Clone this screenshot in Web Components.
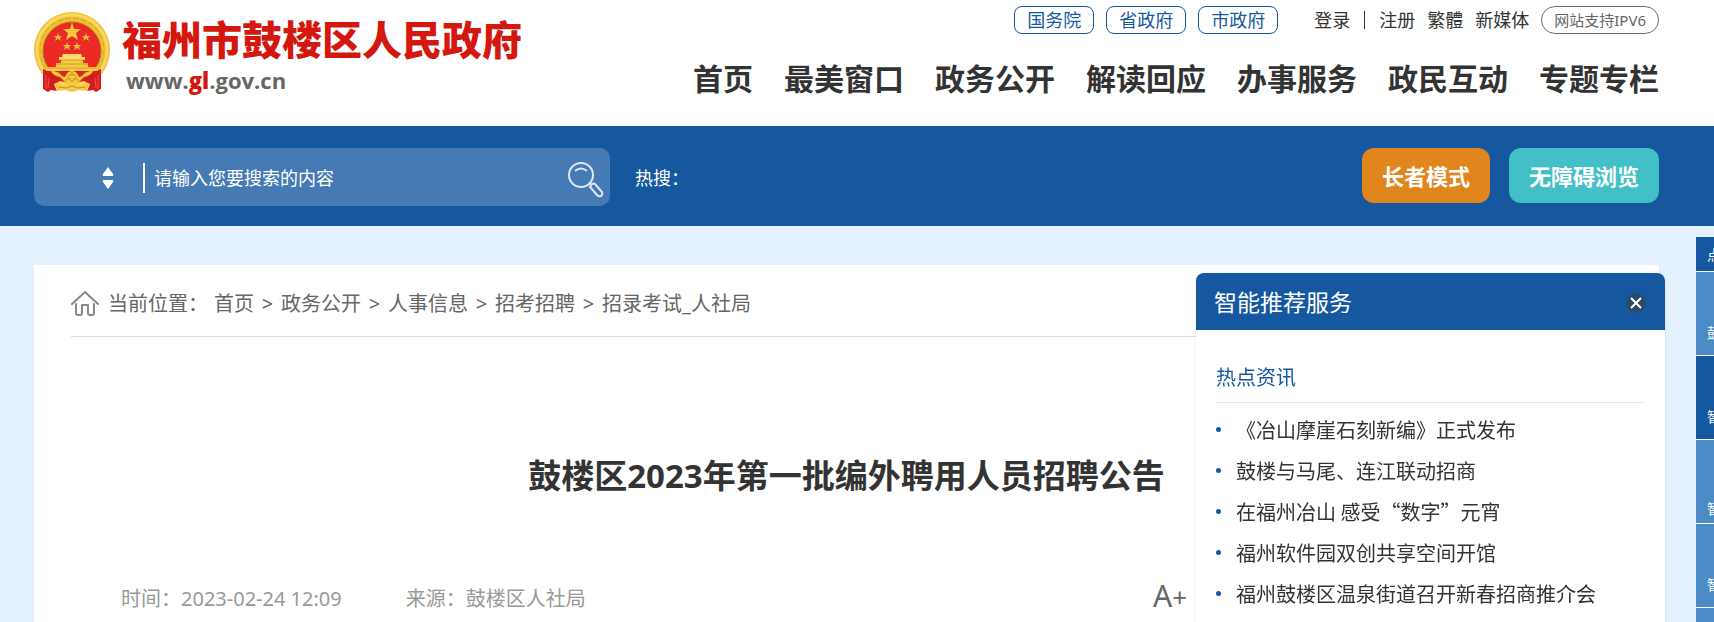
<!DOCTYPE html>
<html lang="zh-CN">
<head>
<meta charset="utf-8">
<meta name="viewport" content="width=device-width, initial-scale=1">
<title>鼓楼区2023年第一批编外聘用人员招聘公告</title>
<style>
  :root {
    --blue: #16589f;
    --blue-light: #4d8bc7;
    --page: #e4f2ff;
    --text: #333;
    --muted: #666;
    --gutter-left: 34px;
    --gutter-right: 55px;
  }

  body {
    margin: 0;
    background: var(--page);
    color: var(--text);
    font-family: "Noto Sans", "Noto Sans CJK SC", sans-serif;
    font-size: 18px;
    overflow: hidden;
  }
</style>
</head>
<body>
  <site-header></site-header>
  <search-bar></search-bar>
  <article-page heading="鼓楼区2023年第一批编外聘用人员招聘公告">
    <a slot="crumb" href="#">首页</a>
    <a slot="crumb" href="#">政务公开</a>
    <a slot="crumb" href="#">人事信息</a>
    <a slot="crumb" href="#">招考招聘</a>
    <a slot="crumb" href="#">招录考试_人社局</a>
    <span slot="meta">时间：2023-02-24 12:09</span>
    <span slot="meta">来源：鼓楼区人社局</span>
  </article-page>
  <recommend-panel heading="智能推荐服务" topic="热点资讯">
    <a href="#">《冶山摩崖石刻新编》正式发布</a>
    <a href="#">鼓楼与马尾、连江联动招商</a>
    <a href="#">在福州冶山 感受“数字”元宵</a>
    <a href="#">福州软件园双创共享空间开馆</a>
    <a href="#">福州鼓楼区温泉街道召开新春招商推介会</a>
  </recommend-panel>
  <side-tools></side-tools>

<script>
  // site-header
  class SiteHeader extends HTMLElement {
    constructor() {
      super();
      this.attachShadow({ mode: 'open' });

      this.shadowRoot.innerHTML = `
      <style>
        :host {
          display: flex;
          justify-content: space-between;
          box-sizing: border-box;
          height: 126px;
          padding: 0 var(--gutter-right) 0 var(--gutter-left);
          background: #fff;
        }

        a {
          color: inherit;
          text-decoration: none;
          white-space: nowrap;
        }

        .brand {
          display: flex;
          align-items: flex-start;
          gap: 12px;
          padding-top: 12px;
        }

        .brand svg {
          width: 76px;
          height: 80px;
        }

        .name {
          display: block;
          color: #d5180f;
          font-size: 40px;
          font-weight: 900;
          line-height: 56px;
        }

        .domain {
          display: block;
          padding-left: 4px;
          color: var(--muted);
          font-family: "Open Sans", sans-serif;
          font-size: 22px;
          font-weight: 700;
          line-height: 24px;
        }

        .domain b {
          color: #d5180f;
        }

        .right {
          display: flex;
          flex-direction: column;
          align-items: flex-end;
          gap: 23px;
          padding-top: 6px;
        }

        .top,
        .links {
          display: flex;
          align-items: center;
          gap: 12px;
          line-height: 26px;
        }

        .links {
          padding-left: 24px;
        }

        .pill {
          padding: 0 12px;
          border: 1px solid var(--blue);
          border-radius: 8px;
          color: var(--blue);
        }

        .ipv6 {
          padding: 0 12px;
          border: 1px solid var(--muted);
          border-radius: 14px;
          color: var(--muted);
          font-size: 15px;
        }

        .bar {
          width: 1px;
          height: 18px;
          margin: 0 2px;
          background: var(--text);
        }

        nav {
          display: flex;
          gap: 31px;
          font-size: 30px;
          font-weight: 700;
          line-height: 44px;
        }
      </style>

      <a class="brand" href="#">
        <svg viewBox="0 0 76 80" aria-hidden="true">
          <circle cx="38" cy="38" r="38" fill="#f0bf33"/>
          <circle cx="38" cy="38" r="35" fill="none" stroke="#f8d861" stroke-width="3"/>
          <circle cx="38" cy="38" r="32" fill="none" stroke="#dca323" stroke-width="1" stroke-dasharray="5 3"/>
          <circle cx="38" cy="39" r="29" fill="#ea2a24" stroke="#a8781c" stroke-width="1"/>
          <path d="M38 10l2 7h7l-5 4 2 7-6-4-6 4 2-7-5-4h7z" fill="#f5c93c"/>
          <g fill="#efb637">
            <path id="star" d="M24 21l1 3h3l-2 2 1 3-3-2-3 2 1-3-2-2h3z"/>
            <use href="#star" x="28"/>
            <use href="#star" x="9" y="9"/>
            <use href="#star" x="19" y="9"/>
          </g>
          <path d="M29 42h18l1 3h3v3H25v-3h3z" fill="#fbdc6c"/>
          <path d="M27 48h22v3h5v4h9l2 4H11l2-4h9v-4h5z" fill="#f6cb45"/>
          <path d="M27 48h22M22 52h32M14 56h48" stroke="#dc9a25" stroke-width="1" fill="none"/>
          <path d="M11 59h54l-8 8-19 5-19-5z" fill="#dc2420"/>
          <path d="M9 57l10 5 9 6-8 4 3 7-6-1-3 2-5-3zM67 57l-10 5-9 6 8 4-3 7 6-1 3 2 5-3z" fill="#d31c1c"/>
          <path d="M12 63v14M15 66l-1 10M64 63v14M61 66l1 10" stroke="#f2524a" stroke-width="1" fill="none"/>
          <path d="M17 59q8 0 11 5l3 1q2-6 7-6t7 6l3-1q3-5 11-5-2 5-9 6l-7 7H33l-7-7q-7-1-9-6z" fill="#f3c63b"/>
          <path d="M33 65q5-5 10 0M31 69l4-3 3 4 3-4 4 3M38 60v3" stroke="#c68d20" stroke-width="1" fill="none"/>
          <path d="M20 72l9 1 9-3 9 3 9-1-4 7-7-1-7 2-7-2-7 1z" fill="#f5ca42"/>
          <path d="M25 75l7 1 6-2 6 2 7-1" stroke="#c98e20" stroke-width="1" fill="none"/>
        </svg>
        <span>
          <span class="name">福州市鼓楼区人民政府</span>
          <span class="domain">www.<b>gl</b>.gov.cn</span>
        </span>
      </a>

      <div class="right">
        <div class="top">
          <a class="pill" href="#">国务院</a>
          <a class="pill" href="#">省政府</a>
          <a class="pill" href="#">市政府</a>
          <div class="links">
            <a href="#">登录</a>
            <span class="bar"></span>
            <a href="#">注册</a>
            <a href="#">繁體</a>
            <a href="#">新媒体</a>
            <a class="ipv6" href="#">网站支持IPV6</a>
          </div>
        </div>
        <nav>
          <a href="#">首页</a>
          <a href="#">最美窗口</a>
          <a href="#">政务公开</a>
          <a href="#">解读回应</a>
          <a href="#">办事服务</a>
          <a href="#">政民互动</a>
          <a href="#">专题专栏</a>
        </nav>
      </div>
    `;
    }
  }

  // search-bar
  class SearchBar extends HTMLElement {
    constructor() {
      super();
      this.attachShadow({ mode: 'open' });

      this.shadowRoot.innerHTML = `
      <style>
        :host {
          display: flex;
          align-items: flex-start;
          box-sizing: border-box;
          height: 100px;
          padding: 22px var(--gutter-right) 0 var(--gutter-left);
          background: var(--blue);
          color: #fff;
        }

        form {
          display: flex;
          align-items: center;
          box-sizing: border-box;
          flex: 0 1 576px;
          height: 58px;
          padding: 2px 6px 0 0;
          border-radius: 10px;
          background: #457ab4;
        }

        .type {
          display: grid;
          grid-template-columns: 68px 12px 1fr;
          align-items: center;
          width: 109px;
          height: 30px;
          border-right: 2px solid #fff;
        }

        .type svg {
          grid-area: 1 / 2;
          width: 12px;
          height: 22px;
          pointer-events: none;
        }

        select {
          grid-area: 1 / 1 / 2 / 4;
          width: 100%;
          height: 30px;
          border: 0;
          background: none;
          color: inherit;
          font: inherit;
          appearance: none;
        }

        input {
          flex: 1;
          min-width: 0;
          height: 40px;
          padding: 0 9px;
          border: 0;
          background: none;
          color: #fff;
          font: inherit;
        }

        input::placeholder {
          color: #fff;
          opacity: 1;
        }

        button {
          border: 0;
          border-radius: 12px;
          color: #fff;
          font: inherit;
          cursor: pointer;
        }

        .go {
          width: 36px;
          height: 42px;
          padding: 4px 0 0;
          background: none;
        }

        .go svg {
          display: block;
        }

        .hot {
          flex: 1;
          padding-left: 25px;
          line-height: 60px;
        }

        .modes {
          display: flex;
          gap: 19px;
        }

        .modes button {
          height: 55px;
          padding: 0 20px 2px;
          background: #e0861c;
          font-size: 22px;
          font-weight: 700;
          white-space: nowrap;
        }

        .modes .access {
          background: #43bfc7;
        }
      </style>

      <form role="search">
        <div class="type">
          <select aria-label="搜索类型"></select>
          <svg viewBox="0 0 12 22" fill="#fff" aria-hidden="true">
            <path d="M6 0l5 7q1 2-1 2H2q-2 0-1-2zM6 22l5-7q1-2-1-2H2q-2 0-1 2z"/>
          </svg>
        </div>
        <input type="search" aria-label="搜索" placeholder="请输入您要搜索的内容">
        <button class="go" type="button" aria-label="搜索">
          <svg width="36" height="38" viewBox="0 0 36 38" fill="none" stroke="#dce7f3" stroke-width="2" aria-hidden="true">
            <circle cx="13" cy="14" r="12"/>
            <path d="M7 10q6-5 12 0M21 23l2-1"/>
            <path d="M22 26l2-3q2-1 3 0l7 8q1 3-1 4-2 1-4-1z"/>
          </svg>
        </button>
      </form>
      <div class="hot">热搜：</div>
      <div class="modes">
        <button type="button">长者模式</button>
        <button type="button" class="access">无障碍浏览</button>
      </div>
    `;
    }
  }

  // article-page
  class ArticlePage extends HTMLElement {
    constructor() {
      super();
      this.attachShadow({ mode: 'open' });

      this.shadowRoot.innerHTML = `
      <style>
        :host {
          display: block;
          min-height: 357px;
          margin: 39px var(--gutter-right) 0 var(--gutter-left);
          padding: 0 37px;
          box-sizing: border-box;
          background: #fff;
          font-size: 20px;
        }

        .crumbs {
          display: flex;
          align-items: center;
          height: 67px;
          padding-top: 4px;
          border-bottom: 1px solid #cfdff0;
          color: var(--muted);
        }

        .crumbs svg {
          width: 28px;
          height: 26px;
          margin-right: 9px;
        }

        .label {
          margin-right: 6px;
        }

        ::slotted(a) {
          color: inherit;
          text-decoration: none;
        }

        ::slotted(a:not(:first-child))::before {
          content: '>';
          display: inline-block;
          width: 27px;
          text-align: center;
        }

        h1 {
          margin: 115px 0 0;
          font-size: 33px;
          font-weight: 700;
          line-height: 48px;
          text-align: center;
        }

        .meta {
          display: flex;
          align-items: center;
          gap: 64px;
          margin-top: 78px;
          padding: 0 435px 0 50px;
          color: #999;
          line-height: 40px;
        }

        button {
          margin-left: auto;
          padding: 0 0 4px;
          border: 0;
          background: none;
          color: var(--muted);
          font: inherit;
          font-size: 30px;
          line-height: 36px;
        }

        button span {
          font-size: 26px;
        }
      </style>

      <div class="crumbs">
        <svg viewBox="0 0 28 26" fill="none" stroke="#888" stroke-width="2" stroke-linejoin="round" stroke-linecap="round" aria-hidden="true">
          <path d="M1 14L14 2l13 12"/>
          <path d="M5 14v9q0 2 2 2h2q2 0 2-2v-8h6v8q0 2 2 2h2q2 0 2-2v-9"/>
        </svg>
        <span class="label">当前位置：</span>
        <slot name="crumb"></slot>
      </div>
      <h1></h1>
      <div class="meta">
        <slot name="meta"></slot>
        <button type="button" aria-label="放大字体">A<span>+</span></button>
      </div>
    `;
    }

    connectedCallback() {
      this.shadowRoot.querySelector('h1').textContent = this.getAttribute('heading');
    }
  }

  // recommend-panel
  class RecommendPanel extends HTMLElement {
    constructor() {
      super();
      this.attachShadow({ mode: 'open' });

      this.shadowRoot.innerHTML = `
      <style>
        :host {
          position: fixed;
          top: 273px;
          right: 49px;
          width: 469px;
          height: 420px;
          border-radius: 8px 8px 0 0;
          background: #fff;
          box-shadow: 0 0 3px rgba(0, 60, 140, 0.12);
          font-family: "Noto Sans CJK SC", sans-serif;
          font-size: 20px;
        }

        header {
          display: flex;
          align-items: center;
          justify-content: space-between;
          box-sizing: border-box;
          height: 57px;
          padding: 0 19px 0 18px;
          border-radius: 8px 8px 0 0;
          background: var(--blue);
          color: #fff;
        }

        h2,
        h3 {
          margin: 0;
          font-weight: 400;
        }

        h2 {
          padding-bottom: 2px;
          font-size: 23px;
        }

        button {
          width: 20px;
          height: 22px;
          padding: 2px 0 0;
          border: 0;
          background: none;
        }

        button svg {
          display: block;
        }

        .body {
          padding: 27px 20px 0;
        }

        h3 {
          padding-bottom: 5px;
          border-bottom: 1px solid #e6e6e6;
          color: var(--blue);
          font-size: 20px;
          line-height: 40px;
        }

        .list {
          display: flex;
          flex-direction: column;
          padding-top: 6px;
        }

        ::slotted(a) {
          display: flex;
          align-items: center;
          color: var(--text);
          line-height: 41px;
          text-decoration: none;
          white-space: nowrap;
        }

        ::slotted(a)::before {
          content: '';
          width: 5px;
          height: 5px;
          margin-right: 15px;
          border-radius: 50%;
          background: var(--blue);
        }
      </style>

      <header>
        <h2></h2>
        <button type="button" aria-label="关闭">
          <svg width="20" height="20" viewBox="0 0 20 20" stroke="#fff" stroke-width="2" aria-hidden="true">
            <circle cx="10" cy="10" r="10" fill="#2d4a6c" stroke="none"/>
            <path d="M5 5l10 10M15 5L5 15"/>
          </svg>
        </button>
      </header>
      <div class="body">
        <h3></h3>
        <div class="list"><slot></slot></div>
      </div>
    `;

      this.shadowRoot.querySelector('button').addEventListener('click', () => this.remove());
    }

    connectedCallback() {
      this.shadowRoot.querySelector('h2').textContent = this.getAttribute('heading');
      this.shadowRoot.querySelector('h3').textContent = this.getAttribute('topic');
    }
  }

  // side-tools, docked to the window edge and mostly tucked away
  class SideTools extends HTMLElement {
    constructor() {
      super();
      this.attachShadow({ mode: 'open' });

      this.shadowRoot.innerHTML = `
      <style>
        :host {
          position: fixed;
          top: 237px;
          right: 0;
          display: flex;
          flex-direction: column;
          gap: 1px;
          width: 18px;
          overflow: hidden;
          background: #fff;
          font-size: 14px;
        }

        a {
          display: flex;
          align-items: flex-end;
          box-sizing: border-box;
          height: 83px;
          padding: 0 0 12px 11px;
          background: var(--blue-light);
          color: #fff;
          line-height: 20px;
          text-decoration: none;
        }

        .toggle {
          height: 34px;
          padding-bottom: 6px;
        }

        .toggle,
        .active {
          background: var(--blue);
        }

        .low {
          padding-bottom: 4px;
        }
      </style>

      <a class="toggle" href="#">点</a>
      <a href="#">鼓</a>
      <a class="active" href="#">智</a>
      <a class="low" href="#">智</a>
      <a href="#">智</a>
      <a href="#" aria-label="更多"></a>
    `;
    }
  }

  customElements.define('site-header', SiteHeader);
  customElements.define('search-bar', SearchBar);
  customElements.define('article-page', ArticlePage);
  customElements.define('recommend-panel', RecommendPanel);
  customElements.define('side-tools', SideTools);
</script>
</body>
</html>
